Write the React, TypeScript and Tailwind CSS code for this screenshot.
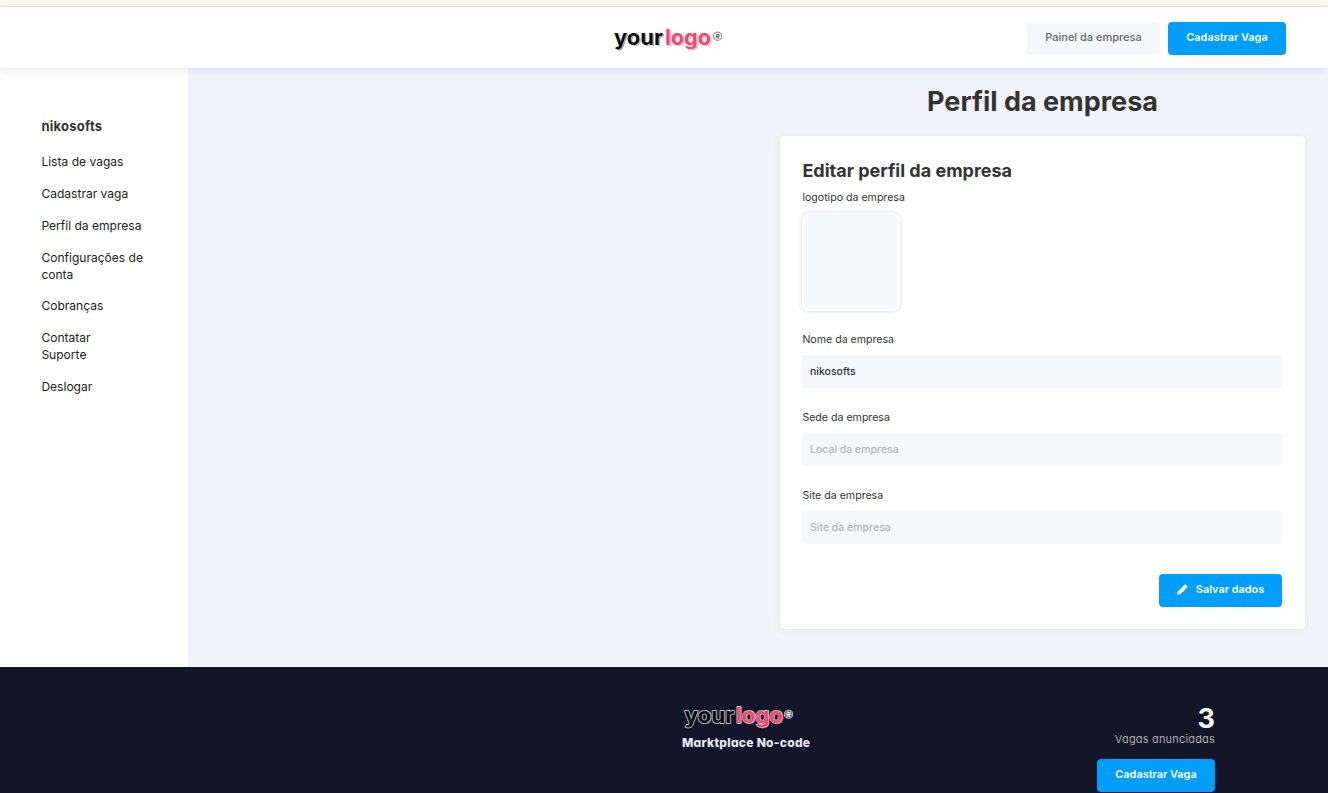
import React from "react";

const navItems = [
  "Lista de vagas",
  "Cadastrar vaga",
  "Perfil da empresa",
  "Configurações de conta",
  "Cobranças",
  "Contatar Suporte",
  "Deslogar",
];

function Logo({ dark = false }: { dark?: boolean }) {
  const base = {
    fontFamily: "Inter, sans-serif",
    fontWeight: 700,
    fontSize: 21,
    lengthAdjust: "spacingAndGlyphs" as const,
  };
  return (
    <svg width="114" height="34" viewBox="-2 -4 114 34" className="-mt-1 -ml-[2px] block overflow-visible">
      {dark ? (
        <g stroke="#b9b9bd" strokeWidth="1.8" paintOrder="stroke" strokeLinejoin="round">
          <text {...base} x="0.5" y="18.5" textLength="50" fill="#080810">your</text>
          <text {...base} x="52" y="18.5" textLength="47" fill="#fb4570">logo</text>
        </g>
      ) : (
        <g>
          <text {...base} x="2.2" y="19.7" textLength="49" fill="#999">your</text>
          <text {...base} x="53.2" y="19.7" textLength="46" fill="#fd93aa">logo</text>
          <text {...base} x="1" y="18.5" textLength="49" fill="#0b0b0b" stroke="#fff" strokeWidth=".8" paintOrder="stroke">your</text>
          <text {...base} x="52" y="18.5" textLength="46" fill="#fb4570" stroke="#fff" strokeWidth=".8" paintOrder="stroke">logo</text>
        </g>
      )}
      <circle cx="104.5" cy="10.2" r="4.1" fill={dark ? "#77777d" : "#fff"} stroke={dark ? "#b9b9bd" : "#777"} strokeWidth="1" />
      <text x="102.4" y="12.7" transform="rotate(12 104.5 10.2)" fontFamily="Inter, sans-serif" fontWeight="700" fontSize="6.5" fill={dark ? "#eee" : "#555"}>R</text>
    </svg>
  );
}

function PrimaryButton({ children, className }: { children: React.ReactNode; className: string }) {
  return (
    <button className={`flex h-[33px] items-center justify-center rounded-[4px] bg-[#009efb] pb-[2px] text-[10.9px] font-semibold text-white ${className}`}>
      {children}
    </button>
  );
}

function Field({ label, value, placeholder }: { label: string; value?: string; placeholder?: string }) {
  return (
    <label className="flex h-[78px] flex-col">
      <span className="h-6 pt-px pl-[0.4px] text-[10.6px] leading-4">{label}</span>
      <input
        defaultValue={value}
        placeholder={placeholder}
        className="h-[33px] w-full rounded-[4px] bg-[#f4f8fb] px-2 text-[10.5px] font-medium text-[#333] outline-none placeholder:text-[#b5b5b5] placeholder:opacity-100"
      />
    </label>
  );
}

export default function App() {
  return (
    <div className="flex h-[793px] w-full flex-col overflow-hidden bg-[#f3f4fa] font-['Inter',sans-serif] text-[#333]">
      <div className="h-[7px] shrink-0 border-b border-[#e4e2d0] bg-[#fdfbed]" />
      <header className="relative z-10 grid h-[61px] shrink-0 grid-cols-[1fr_110px_1fr] bg-white shadow-[0_2px_10px_rgba(0,0,0,0.1)]">
        <div />
        <div className="ml-[4px] pt-[19px]"><Logo /></div>
        <div className="flex justify-end gap-2 pt-[15px] pr-[42px]">
          <button className="flex h-[33px] w-[133px] items-center justify-center rounded-[4px] bg-[#f4f8fb] pb-[2px] text-[11px] font-medium text-[#666]">
            Painel da empresa
          </button>
          <PrimaryButton className="w-[118px]">Cadastrar Vaga</PrimaryButton>
        </div>
      </header>

      <div className="flex h-[599px] shrink-0">
        <aside className="w-[188px] shrink-0 bg-white pt-[49px] pr-[43px] pl-[41.4px]">
          <h2 className="text-[13px] leading-[18px] font-bold tracking-[0.25px]">nikosofts</h2>
          <nav className="mt-[18px] flex flex-col gap-[14.85px] text-[12.05px] leading-[17px] text-[#222]">
            {navItems.map((item) => (
              <a key={item} className={item === "Contatar Suporte" ? "w-[70px]" : ""}>{item}</a>
            ))}
          </nav>
        </aside>

        <main className="flex flex-1 flex-col items-end pr-[23px]">
          <h1 className="flex h-[68px] w-[525px] items-center justify-center text-[27px] font-bold">Perfil da empresa</h1>
          <section className="h-[493px] w-[525px] rounded-[4px] bg-white pt-[22px] pr-[23px] pl-[22px] shadow-[0_0_8px_rgba(0,0,0,0.08)]">
            <h2 className="pl-[0.4px] text-[18px] leading-[26px] font-bold">Editar perfil da empresa</h2>
            <p className="mt-[6px] pl-[0.4px] text-[10.6px] leading-4">logotipo da empresa</p>
            <div className="mt-[7px] h-[98px] w-[98px] rounded-[7px] border-2 border-white bg-[#f4f8fb] shadow-[0_0_5px_rgba(0,0,0,0.16)]" />
            <div className="mt-[20px]">
              <Field label="Nome da empresa" value="nikosofts" />
              <Field label="Sede da empresa" placeholder="Local da empresa" />
              <Field label="Site da empresa" placeholder="Site da empresa" />
            </div>
            <div className="mt-[9px] flex justify-end">
              <PrimaryButton className="w-[123px] gap-[8px]">
                <svg width="11" height="11" viewBox="0 0 11 11" fill="currentColor">
                  <path d="M.3 10.7.7 7.5 6.4 1.8 7.7.5q.6-.5 1.1 0l1.7 1.7q.5.5 0 1.1L9.2 4.6l-5.7 5.7Z" />
                </svg>
                Salvar dados
              </PrimaryButton>
            </div>
          </section>
        </main>
      </div>

      <footer className="flex flex-1 justify-between bg-[#131628] pr-[113px] pl-[682px]">
        <div className="pt-[37px]">
          <div className="ml-[2px] h-[30px]"><Logo dark /></div>
          <p className="mt-[4px] text-[12px] leading-[18px] font-extrabold tracking-[0.28px] whitespace-nowrap text-[#e7e8f5] [font-feature-settings:'cv11']">Marktplace No-code</p>
        </div>
        <div className="flex flex-col items-end pt-[37px]">
          <strong className="text-[27px] leading-[30px] font-bold text-white">3</strong>
          <span className="-mt-[2px] text-[11px] leading-[14px] tracking-[0.18px] text-[#aaa] [font-feature-settings:'cv11']">Vagas anunciadas</span>
          <PrimaryButton className="mt-[13px] w-[118px] shrink-0">Cadastrar Vaga</PrimaryButton>
        </div>
      </footer>
    </div>
  );
}
